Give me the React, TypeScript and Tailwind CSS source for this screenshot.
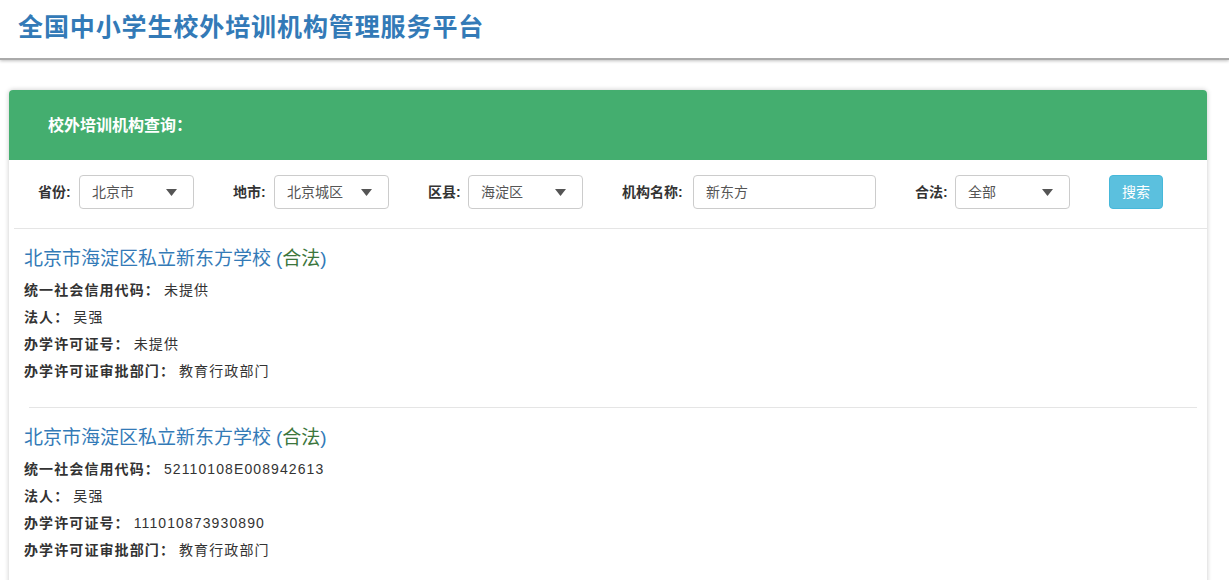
import React from 'react';

const font = { fontFamily: '"Liberation Sans", "Noto Sans CJK SC", sans-serif' };

function Caret() {
  return (
    <svg width="11" height="7" viewBox="0 0 11 7" className="shrink-0">
      <path d="M0 0 L11 0 L5.5 7 Z" fill="#555" />
    </svg>
  );
}

function SelectBox({ value }: { value: string }) {
  return (
    <div className="w-[115px] h-[34px] border border-[#ccc] rounded-[4px] bg-white flex items-center justify-between pl-[12px] pr-[16px] text-[14px] text-[#555]">
      <span>{value}</span>
      <Caret />
    </div>
  );
}

function Field({ label, value }: { label: string; value: string }) {
  return (
    <div className="h-[27px] flex items-center text-[14px] tracking-[1.1px] text-[#333]">
      <span className="font-bold">{label}：</span>
      <span className="ml-[4px]">{value}</span>
    </div>
  );
}

interface School {
  name: string;
  status: string;
  code: string;
  person: string;
  license: string;
  dept: string;
}

const schools: School[] = [
  { name: '北京市海淀区私立新东方学校', status: '合法', code: '未提供', person: '吴强', license: '未提供', dept: '教育行政部门' },
  { name: '北京市海淀区私立新东方学校', status: '合法', code: '52110108E008942613', person: '吴强', license: '111010873930890', dept: '教育行政部门' },
];

export default function App() {
  return (
    <div className="w-[1229px] h-[580px] overflow-hidden bg-white" style={font}>
      <header className="h-[60px] flex items-center pl-[18px] border-b-2 border-[#aaa] shadow-[0_1px_3px_rgba(0,0,0,0.25)]">
        <h1 className="text-[25px] font-bold tracking-[0.9px] text-[#337ab7] leading-none -mt-[4px]">
          全国中小学生校外培训机构管理服务平台
        </h1>
      </header>

      <div className="ml-[9px] mt-[30px] w-[1198px] rounded-t-[4px] bg-white shadow-[0_0_5px_rgba(0,0,0,0.22)] h-[600px]">
        <div className="h-[70px] bg-[#44ae6f] rounded-t-[4px] flex items-center pl-[39px]">
          <span className="text-white font-bold text-[16px] mt-[2px]">校外培训机构查询：</span>
        </div>

        <div className="h-[69px] flex items-start pt-[15px] pl-[29px] border-b border-[#e5e5e5] ml-[5px]">
          <div className="w-[195px] flex items-center -ml-[5px]">
            <span className="font-bold text-[14px] text-[#333] w-[41px]">省份:</span>
            <SelectBox value="北京市" />
          </div>
          <div className="w-[195px] flex items-center">
            <span className="font-bold text-[14px] text-[#333] w-[41px]">地市:</span>
            <SelectBox value="北京城区" />
          </div>
          <div className="w-[194px] flex items-center">
            <span className="font-bold text-[14px] text-[#333] w-[40px]">区县:</span>
            <SelectBox value="海淀区" />
          </div>
          <div className="w-[293px] flex items-center">
            <span className="font-bold text-[14px] text-[#333] w-[71px]">机构名称:</span>
            <div className="w-[183px] h-[34px] border border-[#ccc] rounded-[4px] flex items-center pl-[12px] text-[14px] text-[#555]">
              新东方
            </div>
          </div>
          <div className="w-[194px] flex items-center">
            <span className="font-bold text-[14px] text-[#333] w-[40px]">合法:</span>
            <SelectBox value="全部" />
          </div>
          <button className="w-[54px] h-[34px] bg-[#5bc0de] border border-[#46b8da] rounded-[4px] text-white text-[14px]">
            搜索
          </button>
        </div>

        <div>
          {schools.map((s, i) => (
            <div key={i}>
              {i > 0 && <div className="ml-[20px] mr-[10px] border-t border-[#e5e5e5]" />}
              <div className="pl-[15px] pt-[17px] pb-[22px]">
                <div className="h-[26px] flex items-center text-[19px] text-[#337ab7] mb-[5px]">
                  <span>{s.name}</span>
                  <span className="ml-[5px]">
                    (<span className="text-[#3c763d]">{s.status}</span>)
                  </span>
                </div>
                <Field label="统一社会信用代码" value={s.code} />
                <Field label="法人" value={s.person} />
                <Field label="办学许可证号" value={s.license} />
                <Field label="办学许可证审批部门" value={s.dept} />
              </div>
            </div>
          ))}
        </div>
      </div>
    </div>
  );
}
